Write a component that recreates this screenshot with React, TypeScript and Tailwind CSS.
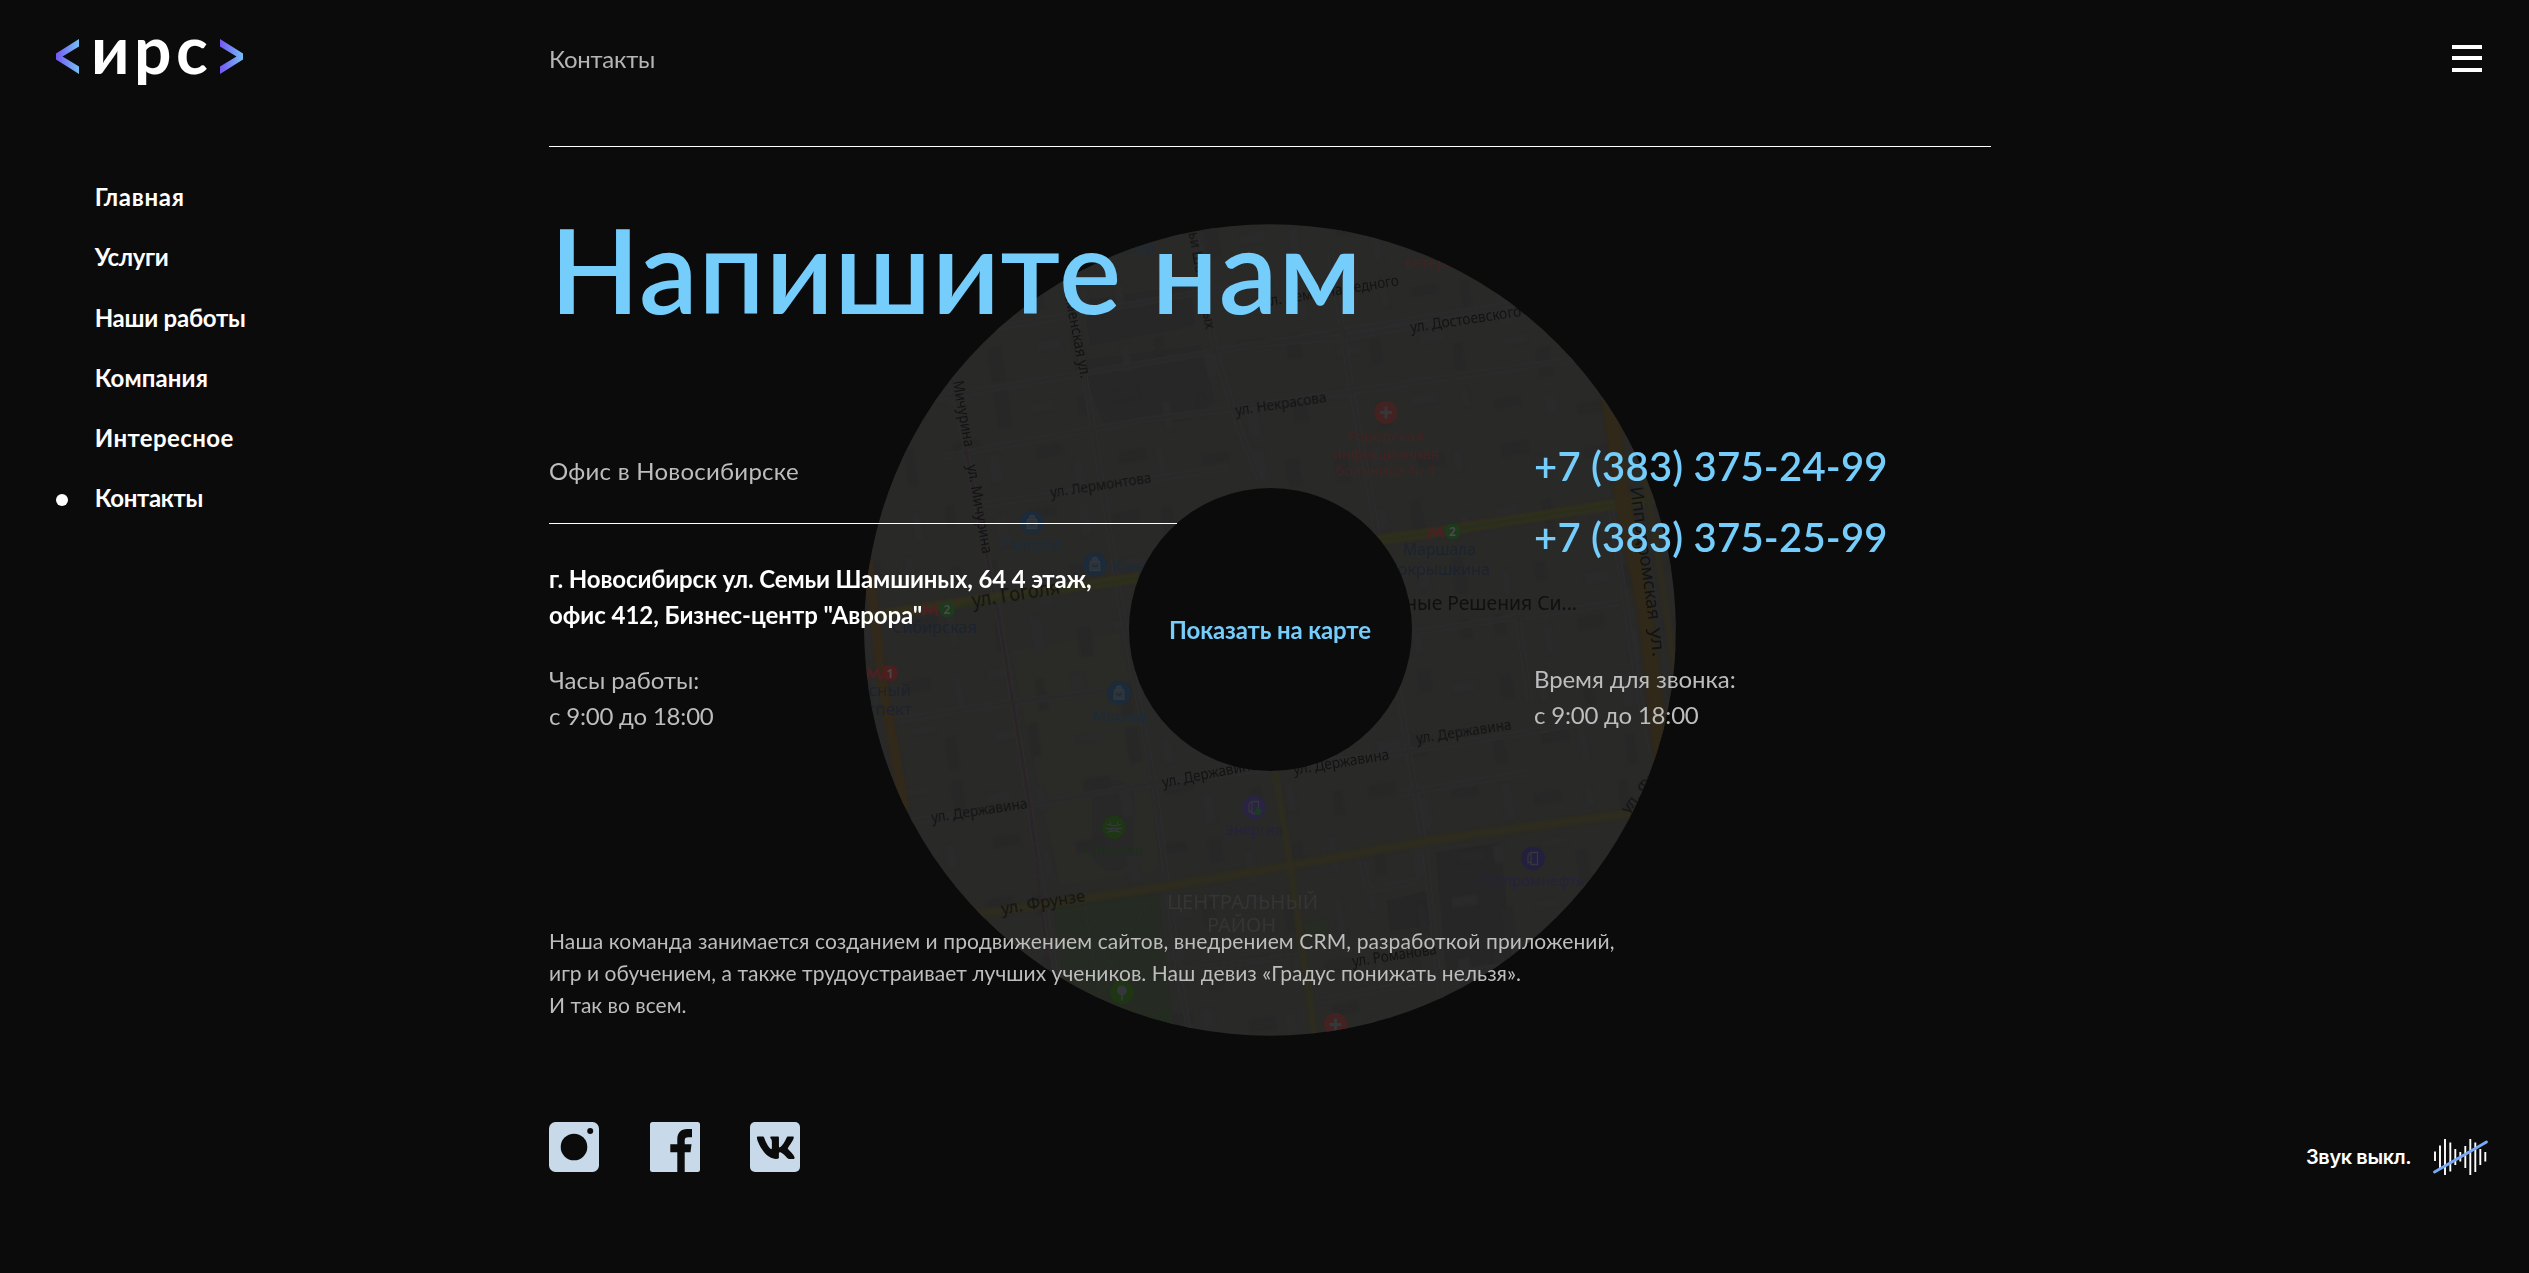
const menu = [
  { label: "Главная", tracking: "tracking-[0.7px]" },
  { label: "Услуги", tracking: "tracking-[-0.35px]" },
  { label: "Наши работы", tracking: "tracking-[-0.25px]" },
  { label: "Компания", tracking: "tracking-[0.1px]" },
  { label: "Интересное", tracking: "tracking-[0.4px]" },
  { label: "Контакты", tracking: "tracking-[-0.3px]", active: true },
];

function Logo() {
  return (
    <div className="mt-[9px] flex h-20 items-start">
      <svg className="mt-[30px] h-[35px] w-[23px]" viewBox="0 0 23 35">
        <defs>
          <linearGradient id="chevron" x1="0" x2="1" y1="0" y2="0">
            <stop offset="0" stopColor="#7457f6" />
            <stop offset="1" stopColor="#74bff4" />
          </linearGradient>
        </defs>
        <path d="M23 0v7.5L6.5 17.5 23 27.5v7.5L0 20.5v-6z" fill="url(#chevron)" />
      </svg>
      <span className="ml-[12px] w-[129px] text-[66px] leading-[80px] font-bold tracking-[4.5px] text-white">ирс</span>
      <svg className="mt-[30px] h-[35px] w-[23px]" viewBox="0 0 23 35">
        <path d="M0 0v7.5L16.5 17.5 0 27.5v7.5L23 20.5v-6z" fill="url(#chevron)" />
      </svg>
    </div>
  );
}

function Sidebar() {
  return (
    <aside className="w-[549px] shrink-0 pl-14">
      <Logo />
      <nav className="mt-[90px] flex flex-col gap-[24.3px]">
        {menu.map((m) => (
          <a key={m.label} className="flex items-center gap-[26.7px]">
            <span className={m.active ? "mt-[3px] size-3 rounded-full bg-white" : "size-3"} />
            <span className={`text-2xl leading-9 font-bold text-white ${m.tracking}`}>{m.label}</span>
          </a>
        ))}
      </nav>
    </aside>
  );
}

type Label = { x: number; y: number; r?: number; s?: number; w?: number; c?: string; a?: "start" | "middle" | "end"; t: string };

const STREET = "#131313";
const BLUE = "#1c2c3b";
const METRO = "#1d232e";
const RED = "#402424";
const VIOLET = "#26223c";
const GREEN = "#1f301b";

const labels: Label[] = [
  { x: 1155, y: 252, a: "end", c: BLUE, t: "Доктор", s: 17 },
  { x: 1184, y: 206, r: 80, w: 125, s: 15, t: "Семьи Шамшиных" },
  { x: 1063, y: 286, r: 79, w: 94, s: 15, t: "Каменская ул." },
  { x: 953, y: 381, r: 80, w: 67, s: 15, t: "Мичурина" },
  { x: 967, y: 465, r: 80, w: 90, s: 15, t: "ул. Мичурина" },
  { x: 1051, y: 497, r: -8.5, w: 102, t: "ул. Лермонтова", s: 15 },
  { x: 1236, y: 415, r: -8.5, w: 92, t: "ул. Некрасова", s: 15 },
  { x: 1265, y: 306, r: -9, w: 136, t: "ул. Демьяна Бедного", s: 15 },
  { x: 1411, y: 332, r: -8.5, w: 112, t: "ул. Достоевского", s: 15 },
  { x: 973, y: 607, r: -9, w: 89, t: "ул. Гоголя", s: 19 },
  { x: 932, y: 822, r: -8.5, w: 97, t: "ул. Державина", s: 15 },
  { x: 1163, y: 787, r: -11, w: 97, t: "ул. Державина", s: 15 },
  { x: 1294, y: 774, r: -9, w: 97, t: "ул. Державина", s: 15 },
  { x: 1417, y: 743, r: -8.5, w: 96, t: "ул. Державина", s: 15 },
  { x: 1002, y: 914, r: -9, w: 85, t: "ул. Фрунзе", s: 17 },
  { x: 1353, y: 966, r: -8.5, w: 85, t: "ул. Романова", s: 15 },
  { x: 1628, y: 814, r: -52, w: 85, t: "ул. Фрунзе", s: 15 },
  { x: 1630, y: 487, r: 82, w: 134, t: "Ипподромская", s: 18 },
  { x: 1650, y: 628, r: 84, w: 29, t: "ул.", s: 18 },
  { x: 1032, y: 549, a: "middle", w: 58, c: BLUE, t: "Галерея", s: 15 },
  { x: 1112, y: 570, c: BLUE, t: "Юпитер", s: 15 },
  { x: 1119.5, y: 720, a: "middle", w: 54, c: BLUE, t: "Москва", s: 15 },
  { x: 934.5, y: 632, a: "middle", w: 85, c: METRO, t: "Сибирская", s: 17 },
  { x: 911, y: 695, a: "end", c: METRO, t: "Красный", s: 17 },
  { x: 912, y: 714, a: "end", c: METRO, t: "проспект", s: 17 },
  { x: 1439.5, y: 554, a: "middle", w: 73, c: METRO, t: "Маршала", s: 17 },
  { x: 1490, y: 574, a: "end", w: 104, c: METRO, t: "Покрышкина", s: 17 },
  { x: 1386, y: 441, a: "middle", w: 76, c: RED, t: "Городская", s: 15 },
  { x: 1386, y: 458, a: "middle", w: 106, c: RED, t: "инфекционная", s: 15 },
  { x: 1386, y: 475, a: "middle", w: 101, c: RED, t: "больница № 1", s: 15 },
  { x: 1405, y: 267, c: RED, t: "ветеринарная", s: 15 },
  { x: 1114, y: 855, a: "middle", w: 58, c: GREEN, t: "Спартак", s: 15 },
  { x: 1170, y: 1021, a: "end", c: GREEN, t: "Центральный", s: 15 },
  { x: 1254, y: 834, a: "middle", w: 59, c: VIOLET, t: "Энергия", s: 15 },
  { x: 1532.5, y: 885, a: "middle", w: 103, c: VIOLET, t: "Газпромнефть", s: 15 },
  { x: 1242.5, y: 908, a: "middle", w: 151, c: "#353535", t: "ЦЕНТРАЛЬНЫЙ", s: 20 },
  { x: 1241.5, y: 931, a: "middle", w: 69, c: "#353535", t: "РАЙОН", s: 20 },
  { x: 1577, y: 609, a: "end", c: "#101010", t: "Информационные Решения Си...", s: 19.3 },
];

const roads = [
  "M864 410L1190 355 1560 296", "M940 457L1140 420 1220 410 1345 392 1580 358",
  "M980 505L1130 482 1230 467", "M1240 345L1345 337 1500 310", "M980 330L1240 285",
  "M880 722L1010 702 1110 690", "M900 822L1030 805 1150 783 1400 752 1600 720",
  "M1400 793L1530 772", "M1070 286L1095 440 1120 600 1155 790 1180 980 1190 1035",
  "M1196 235L1215 350 1240 430 1260 480", "M1330 250L1350 380 1375 520 1400 700 1425 850 1440 990 1445 1035",
  "M1610 500L1640 700 1655 760", "M950 370L1000 620 1060 1000", "M1360 640L1480 622 1620 602",
  "M1515 600L1530 700", "M1320 1000L1640 940", "M1362 860L1368 890 1420 880", "M1180 970L1300 955",
];

// Deterministic scatter of faint building footprints across the map.
const buildings = Array.from({ length: 300 }, (_, i) => {
  const col = i % 20;
  const row = Math.floor(i / 20);
  const n = (i * 7919 + 104729) % 97;
  const m = (i * 3571 + 611) % 89;
  return {
    x: 860 + col * 42 + (n % 14),
    y: 220 + row * 56 + (m % 18),
    w: n % 3 === 0 ? 26 : 8 + (m % 6),
    h: n % 3 === 0 ? 8 + (n % 5) : 18 + (m % 20),
    dark: m % 2 === 0,
  };
});

function Pin({ x, y, c, kind }: { x: number; y: number; c: string; kind: "bag" | "cross" | "tree" | "fuel" | "ball" }) {
  return (
    <g transform={`translate(${x} ${y})`}>
      <circle r="11.8" fill={c} />
      <g fill="none" stroke="#34383b" strokeWidth="1.3">
        {kind === "bag" && (
          <>
            <path d="M-4.5 -3H4.5L5 6H-5zM-2.500 -3v-1.500a2.500 2.500 0 0 1 5 0V-3" fill="#2c343b" />
            <path d="M-2.500 0.500q2.500 3 5 0" stroke={c} />
          </>
        )}
        {kind === "cross" && <path d="M-6 0H6M0 -6V6" strokeWidth="3" />}
        {kind === "tree" && (
          <>
            <circle cx="0" cy="-2" r="5" fill="#34383b" stroke="none" />
            <path d="M0 0V8" strokeWidth="2" />
          </>
        )}
        {kind === "fuel" && <path d="M-2 -6H4.500V6H-2zM-2 4h-3V-3l2 -3" />}
        {kind === "ball" && <path d="M-7.500 -3.500Q0 0 7.500 -3.500M-8 1H8M-7 5Q0 1.500 7 5M-3.500 -6V-2M3.500 -6V-2M-3 1V4M3 1V4" />}
      </g>
    </g>
  );
}

function Metro({ x, y, c, n }: { x: number; y: number; c: string; n: string }) {
  return (
    <g>
      <path d={`M${x - 26} ${y + 6}l5.500 -12 4 7 4 -7 5.500 12h-4l-2 -5.500 -3.500 5.500 -3.500 -5.500 -2 5.500z`} fill="#4a2022" />
      <circle cx={x} cy={y} r="8" fill={c} />
      <text x={x} y={y + 4.5} textAnchor="middle" fontSize="12" fontWeight="700" fill="#484a48">{n}</text>
    </g>
  );
}

function CityMap() {
  return (
    <svg className="size-full" viewBox="864 223.5 812 812" fontFamily="'Noto Sans', sans-serif">
      <defs>
        <clipPath id="disc"><circle cx="1270" cy="629.5" r="405.8" /></clipPath>
        <filter id="soft" colorInterpolationFilters="sRGB"><feGaussianBlur stdDeviation="0.4" /></filter>
        <filter id="haze" colorInterpolationFilters="sRGB"><feGaussianBlur stdDeviation="1" /></filter>
      </defs>
      <g clipPath="url(#disc)">
        <rect x="860" y="220" width="820" height="820" fill="#292928" />
        <path d="M1080 360L1200 345 1215 400 1190 420 1105 425z" fill="#272727" />
        <path d="M1085 300L1190 285 1195 325 1090 345z" fill="#272727" />
        <path d="M1010 650L1120 632 1150 780 1160 870 1060 885z" fill="#2a2a27" />
        <path d="M1436 852L1500 842 1512 960 1446 970z" fill="#262627" />
        <path d="M1387 900L1430 890 1434 925 1390 930z" fill="#262627" />
        <rect x="1092" y="780" width="42" height="90" rx="20" fill="#272827" />
        <g filter="url(#haze)">
          {buildings.map((b, i) => (
            <rect key={i} x={b.x} y={b.y} width={b.w} height={b.h} transform={`rotate(-9 ${b.x} ${b.y})`} fill={b.dark ? "#272727" : "#2a2a2b"} />
          ))}
        </g>
        <path d="M1053 905L1158 889 1174 1035 1072 1035z" fill="#252a22" />
        <path d="M1060 912L1160 1010M1150 900L1075 1020M1085 905L1100 1000" stroke="#282d25" strokeWidth="1.5" fill="none" />
        <path d="M1303 922l24 -4 3 16 -24 5z" fill="#262b23" />
        <g fill="none" stroke="#2e2e2f" strokeWidth="6">{roads.map((d) => <path key={d} d={d} />)}</g>
        <g fill="none" stroke="#292929" strokeWidth="4">{roads.map((d) => <path key={d} d={d} />)}</g>
        <path d="M966 450L1000 625 1030 805 1052 1000" fill="none" stroke="#2d2328" strokeWidth="1.5" strokeDasharray="14 2" />
        <g fill="none" filter="url(#haze)">
          <path d="M868 560L882 680 905 810" stroke="#32291b" strokeWidth="10" />
          <path d="M864 617L947 604 1140 577M1375 540L1440 531 1620 503 1660 497" stroke="#322f1d" strokeWidth="10" />
          <path d="M960 605L1140 577M1375 540L1440 531 1620 503 1660 497" stroke="#26301c" strokeWidth="2.5" />
          <path d="M1609 395L1622 495 1645 610 1663 770" stroke="#302819" strokeWidth="16" />
          <path d="M1644 470L1665 600 1676 680" stroke="#2d2a20" strokeWidth="8" />
          <path d="M975 914L1160 887 1290 865 1430 840 1560 822 1640 812" stroke="#2e2c1e" strokeWidth="9" />
          <path d="M1274 765L1290 865 1315 1036" stroke="#2e2c1f" strokeWidth="7" />
        </g>
        <g filter="url(#soft)">
          {labels.map((l) => (
            <text
              key={`${l.x}-${l.y}`}
              x={l.x}
              y={l.y}
              fontSize={l.s ?? 15}
              fill={l.c ?? STREET}
              textAnchor={l.a ?? "start"}
              textLength={l.w}
              lengthAdjust="spacingAndGlyphs"
              transform={l.r ? `rotate(${l.r} ${l.x} ${l.y})` : undefined}
            >
              {l.t}
            </text>
          ))}
          <Pin x={1032} y={522} c="#1b2b3b" kind="bag" />
          <Pin x={1095} y={564} c="#1b2b3b" kind="bag" />
          <Pin x={1119} y={692.5} c="#1b2b3b" kind="bag" />
          <Pin x={1114} y={827} c="#1e3614" kind="ball" />
          <Pin x={1122} y={992} c="#1e3614" kind="tree" />
          <Pin x={1254} y={807} c="#2a2342" kind="fuel" />
          <circle cx="1258" cy="811" r="3.5" fill="#1d3a26" />
          <Pin x={1533} y={858} c="#231f3e" kind="fuel" />
          <Pin x={1386} y={412} c="#432222" kind="cross" />
          <Pin x={1335.5} y={1024} c="#432222" kind="cross" />
          <Metro x={947} y={609} c="#1d3a1e" n="2" />
          <Metro x={890} y={672.5} c="#4c1e1e" n="1" />
          <Metro x={1452.5} y={531} c="#1d3a1e" n="2" />
        </g>
      </g>
    </svg>
  );
}

function MapDisc() {
  return (
    <div className="absolute top-[223.5px] left-[864px] grid size-[812px] place-items-center">
      <div className="col-start-1 row-start-1 size-full"><CityMap /></div>
      <button className="col-start-1 row-start-1 size-[283px] rounded-full bg-[#0b0b0b] text-2xl leading-9 font-bold tracking-[-0.14px] text-[#75cdfc]">
        Показать на карте
      </button>
    </div>
  );
}

function Socials() {
  return (
    <div className="mt-[101px] flex gap-[50.5px] text-[#c8d9ea]">
      <svg className="size-[50px]" viewBox="0 0 50 50">
        <rect width="50" height="50" rx="6.5" fill="currentColor" />
        <circle cx="25" cy="25" r="13.3" fill="#0b0b0b" />
        <circle cx="41.2" cy="9" r="3" fill="#0b0b0b" />
      </svg>
      <svg className="size-[50px]" viewBox="0 0 50 50">
        <rect width="50" height="50" rx="2.5" fill="currentColor" />
        <path d="M27.300 50V30.300h-7v-8h7v-5C27.300 11 31 7 37 7h5v8.300h-3.800c-2.600 0-3.500 1.200-3.500 3.200v3.800h6.800l-1 8h-5.800V50z" fill="#0b0b0b" />
      </svg>
      <svg className="size-[50px]" viewBox="0 0 50 50">
        <rect width="50" height="50" rx="5" fill="currentColor" />
        <path
          transform="translate(5.600 7.800) scale(0.0700)"
          fill="#0b0b0b"
          d="M545 117.7c3.7-12.5 0-21.7-17.8-21.7h-58.9c-15 0-21.9 7.9-25.6 16.7 0 0-30 73.1-72.4 120.5-13.7 13.7-20 18.1-27.5 18.1-3.7 0-9.4-4.4-9.4-16.9V117.7c0-15-4.2-21.7-16.6-21.7h-92.6c-9.4 0-15 7-15 13.5 0 14.2 21.2 17.5 23.4 57.5v86.8c0 19-3.4 22.5-10.9 22.5-20 0-68.6-73.4-97.4-157.4-5.8-16.3-11.5-22.9-26.6-22.9H38.8c-16.8 0-20.2 7.9-20.2 16.7 0 15.6 20 93.1 93.1 195.5C160.4 378.1 229 416 291.4 416c37.5 0 42.1-8.4 42.1-22.9 0-66.8-3.4-73.1 15.4-73.1 8.7 0 23.7 4.4 58.7 38.1 40 40 46.6 57.9 69 57.9h58.9c16.8 0 25.3-8.4 20.4-25-11.2-34.9-86.9-106.7-90.3-111.5-8.7-11.2-6.2-16.2 0-26.2.1-.1 72-101.3 79.4-135.6z"
        />
      </svg>
    </div>
  );
}

const bars = [
  [2, 12.5, 22], [7, 6.5, 30], [12, 0, 36], [17.3, 3.5, 32.5], [22.3, 10, 26], [27.3, 13, 22.5],
  [32.3, 7, 29], [37.3, 0, 36], [42.3, 3.5, 33], [47.3, 10, 26], [52.3, 13, 22.5],
];

function RightRail() {
  return (
    <div className="flex flex-1 flex-col items-end justify-between pt-[45px] pb-[98px]">
      <button className="mr-[47px] flex w-[30px] flex-col">
        <span className="h-1 bg-white" />
        <span className="mt-[7px] h-1 bg-white" />
        <span className="mt-2 h-1 bg-white" />
      </button>
      <div className="mr-[41px] flex items-center">
        <span className="w-[127px] font-['Inter',sans-serif] text-[20px] leading-9 font-semibold tracking-[-0.4px] text-white">Звук выкл.</span>
        <svg className="h-9 w-[55px]" viewBox="0 0 55 36">
          {bars.map(([x, a, b]) => (
            <path key={x} d={`M${x} ${a}V${b}`} stroke="#fff" strokeWidth="1.9" />
          ))}
          <path d="M1.500 33L53.500 3" stroke="#78a9f7" strokeWidth="2.8" strokeLinecap="round" />
        </svg>
      </div>
    </div>
  );
}

export default function App() {
  return (
    <div className="relative flex h-[1273px] w-full overflow-hidden bg-[#0b0b0b] font-['Lato',sans-serif] text-[#bdbdbd]">
      <MapDisc />
      <Sidebar />
      <main className="pointer-events-none relative w-[1442px] shrink-0 pt-[41px]">
        <p className="text-2xl leading-9 tracking-[-0.25px] text-[#b5b5b5]">Контакты</p>
        <div className="mt-[69px] h-px bg-white" />
        <h1 className="mt-[62px] pl-px text-[117px] leading-[120px] font-semibold tracking-[0.8px] text-[#75cdfc]">Напишите нам</h1>

        <section className="mt-[112px] flex gap-[357px]">
          <div className="w-[628px] pt-3 text-2xl leading-9">
            <p className="tracking-[0.25px]">Офис в Новосибирске</p>
            <div className="mt-[34px] h-px bg-white" />
            <p className="mt-[37px] font-bold tracking-[-0.15px] whitespace-nowrap text-white">г. Новосибирск ул. Семьи Шамшиных, 64 4 этаж,</p>
            <p className="font-bold tracking-[-0.04px] text-white">офис 412, Бизнес-центр "Аврора"</p>
            <p className="mt-[29px]">Часы работы:</p>
            <p className="tracking-[-0.2px]">с 9:00 до 18:00</p>
          </div>
          <div className="pt-px text-2xl leading-9">
            <div className="flex flex-col gap-[23px] text-[40px] leading-[48px] font-semibold tracking-[0.22px] text-[#75cdfc]">
              <a>+7 (383) 375-24-99</a>
              <a>+7 (383) 375-25-99</a>
            </div>
            <p className="mt-[100px] tracking-[-0.1px]">Время для звонка:</p>
            <p className="tracking-[-0.2px]">с 9:00 до 18:00</p>
          </div>
        </section>

        <div className="mt-[191px] text-[21px] leading-8 whitespace-nowrap">
          <p className="tracking-[0.11px]">Наша команда занимается созданием и продвижением сайтов, внедрением CRM, разработкой приложений,</p>
          <p className="tracking-[0.04px]">игр и обучением, а также трудоустраивает лучших учеников. Наш девиз «Градус понижать нельзя».</p>
          <p>И так во всем.</p>
        </div>
        <Socials />
      </main>
      <RightRail />
    </div>
  );
}
